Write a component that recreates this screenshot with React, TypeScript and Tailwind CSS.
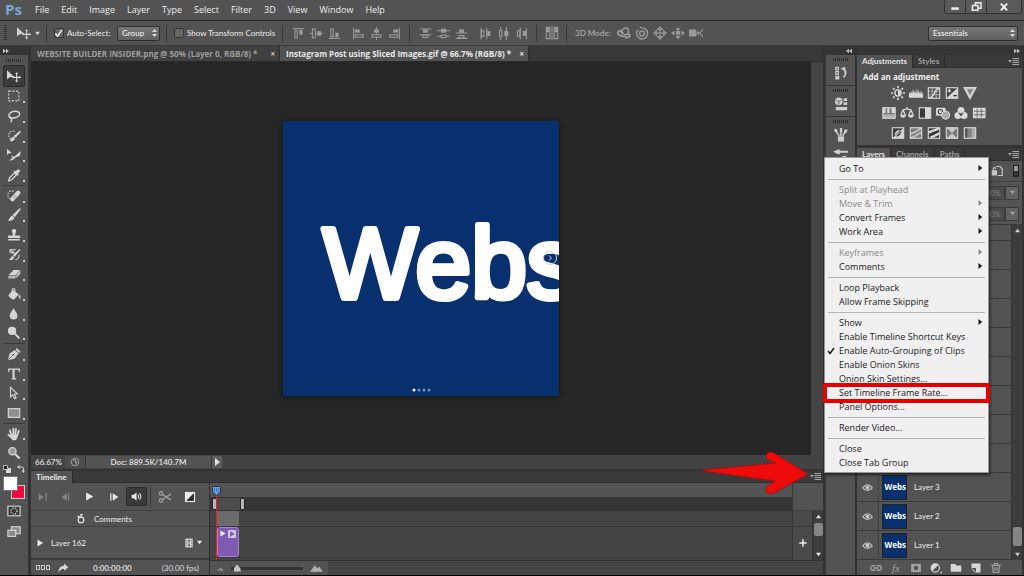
import React from "react";

type Kids = { children?: React.ReactNode };
type IconProps = Kids & { size?: number; box?: string; className?: string };

/* Small icon canvas: 16-unit grid, inherits the text colour. */
function Icon({ size = 14, box = "0 0 16 16", className = "", children }: IconProps) {
  return (
    <svg
      width={size}
      height={size}
      viewBox={box}
      fill="none"
      stroke="currentColor"
      strokeWidth="1.3"
      className={`shrink-0 ${className}`}
      aria-hidden="true"
    >
      {children}
    </svg>
  );
}

const F = { fill: "currentColor", stroke: "none" };

const MoveGlyph = () => (
  <>
    <path {...F} d="M0 1.500v10.500l3-2.600 5-.6z" />
    <path d="M11 5v9M6.800 9.500h8.600" />
    <path {...F} d="M11 3.600l1.800 2.200H9.200zM11 15.400l1.800-2.200H9.200zM5.600 9.500l2-1.700v3.400zM16.200 9.500l-2-1.700v3.400z" />
  </>
);

const tools: { name: string; glyph: React.ReactNode; corner?: boolean; rule?: boolean }[] = [
  { name: "Move Tool", glyph: <MoveGlyph /> },
  { name: "Rectangular Marquee Tool", corner: true, glyph: <rect x="2" y="2.500" width="11.500" height="11" strokeDasharray="2.400 1.600" /> },
  {
    name: "Lasso Tool",
    corner: true,
    glyph: <path strokeWidth="1.600" d="M3.500 10.200C0 7 4 2.400 9.500 2.600c6 .2 6.200 5 1.800 6.800-3 1.300-6.500 1.200-7.200.2-.7 1.300 1.900 1.800 1.500 3.300-.2.900-1.100 1.200-1.600 2" />,
  },
  {
    name: "Quick Selection Tool",
    corner: true,
    glyph: (
      <>
        <path strokeDasharray="1.800 1.300" d="M8.500 2.500a4.600 4.600 0 1 0-3 9.500" />
        <path {...F} d="M16 3.200L9.600 10.200 7.500 8.200 14.700 1.900zM7 8.600l2.200 2.200c-.8 2.800-3.300 3.600-6.400 3.200 1.900-1 2-4.400 4.200-5.400z" />
      </>
    ),
  },
  {
    name: "Slice Tool",
    corner: true,
    glyph: <path {...F} d="M0 1v7l2.200-1.900 3.300-.4zM4.500 8.500L8.300 10 16 3.200 14.500 9l-4 1.500L6 14l-3.600.4 3.900-3.400z" />,
  },
  {
    name: "Eyedropper Tool",
    corner: true,
    glyph: (
      <>
        <path strokeWidth="1.500" d="M8.500 5.500l2.300 2.300-5.800 5.800-3 .9.800-3.200z" />
        <path {...F} d="M7.500 4l1.200-1.200 1.200 1L12 1.700c1.200-1.200 3.800 1.200 2.600 2.600L12.600 6.400l1 1.300-1.200 1.200z" />
      </>
    ),
  },
  {
    name: "Spot Healing Brush Tool",
    corner: true,
    rule: true,
    glyph: (
      <>
        <path strokeDasharray="1.800 1.300" d="M7.500 2.500a4.600 4.600 0 1 0-3.500 8.800" />
        <path strokeWidth="5" strokeLinecap="round" d="M12.800 4.300l-6.500 7.200" />
        <path stroke="#636363" strokeWidth="1" strokeDasharray="1 1" d="M8 6.800l3.500 3M6.500 8.500l3.500 3" />
      </>
    ),
  },
  {
    name: "Brush Tool",
    corner: true,
    glyph: <path {...F} d="M16 .8L9 10.500 6.300 8.100 14.500.4zM5.800 8.700l2.700 2.500c-.9 3.100-4.200 4-7.800 3.200C3.400 13.600 3 9.600 5.800 8.700z" />,
  },
  {
    name: "Clone Stamp Tool",
    corner: true,
    glyph: <path {...F} d="M8 1a2.500 2.500 0 0 1 2 4c-.6.9-.8 2-.6 3.500h4.600c.8 0 1 .4 1 1V11.500H1V9.500c0-.6.3-1 1-1h4.600c.2-1.500 0-2.600-.6-3.500a2.500 2.500 0 0 1 2-4zM1.500 12.700h13V14.400h-13z" />,
  },
  {
    name: "History Brush Tool",
    corner: true,
    glyph: (
      <>
        <path d="M10 2H3.500v4M3.500 2l5 3.500H4.500M13.500 8c.6 3-1 5-4 5.500" />
        <path {...F} d="M15.500 2L8.700 10.200 6.700 8.600 14 1zM6.200 9l2.100 1.900c-1 2.700-3.500 3.300-6.400 2.800 2-.8 2.100-3.800 4.300-4.700z" />
      </>
    ),
  },
  {
    name: "Eraser Tool",
    corner: true,
    glyph: (
      <>
        <path {...F} d="M7.500 3.500h7.500l-5 5.500H2z" />
        <path {...F} opacity=".75" d="M2 9.700h8V13H1z" />
        <path {...F} opacity=".9" d="M10.700 9.200L15.300 4v3.300L10.700 12.800z" />
      </>
    ),
  },
  {
    name: "Paint Bucket Tool",
    corner: true,
    glyph: (
      <>
        <path d="M6 7V3.200a1.500 1.500 0 0 1 3 0V6" />
        <path {...F} d="M7 3.500l6.500 5-5.500 5.800c-.8.700-5.500-2.800-6.200-4.400C1.500 9 6 4.500 7 3.500zM13.500 8.500c2 .7 2.300 2.500 1.800 5.500-1.600-.8-2-2.600-1.800-5.500z" />
      </>
    ),
  },
  { name: "Blur Tool", corner: true, glyph: <path {...F} d="M7.500 1c1.200 3.300 4.500 5.500 4.500 8.800a4.500 4.600 0 0 1-9 0c0-3.300 3.300-5.500 4.500-8.800z" /> },
  {
    name: "Dodge Tool",
    corner: true,
    glyph: (
      <>
        <circle {...F} cx="5.800" cy="5.600" r="4.700" />
        <path strokeWidth="2.200" d="M9 8.800l5 5.200" />
      </>
    ),
  },
  {
    name: "Pen Tool",
    corner: true,
    rule: true,
    glyph: (
      <>
        <path {...F} d="M1 15l2-7.500 6-4 4 4-4.300 6zM9.800 2.800l1.400-1.600 4.300 4.300-1.700 1.400z" />
        <path stroke="#535353" strokeWidth="1" d="M1.500 14.500l5-5" />
        <circle cx="7.300" cy="8.700" r="1.100" fill="#535353" stroke="none" />
      </>
    ),
  },
  { name: "Type Tool", corner: true, glyph: <path strokeWidth="1.500" d="M2 5.500V2.500h12v3M8 2.500v11M5.500 13.500h5M7 3v10.500" /> },
  { name: "Path Selection Tool", corner: true, glyph: <path d="M4 1.500v11l2.600-2.300 2 4.300 1.800-.9-1.900-4.100 3.300-.5z" /> },
  {
    name: "Rectangle Tool",
    corner: true,
    glyph: <rect x="1.500" y="3" width="13" height="10" fill="#909090" />,
  },
  {
    name: "Hand Tool",
    corner: true,
    rule: true,
    glyph: (
      <>
        <path {...F} d="M4 8.500h8.500l-1 4.500-1.500 2H6z" />
        <path strokeWidth="2" strokeLinecap="round" d="M5 9.500L3.300 3.700M7.200 9V1.900M9.400 9l.8-6.800M11.500 10l1.900-5.600M5 12.200L1.500 8.800" />
      </>
    ),
  },
  {
    name: "Zoom Tool",
    glyph: (
      <>
        <circle cx="6.200" cy="6" r="4.200" fill="#9a9a9a" strokeWidth="1.400" />
        <path strokeWidth="2.400" d="M9.500 9.300l5 5" />
      </>
    ),
  },
];

const Grip = () => <span className="h-[3px] w-4 shrink-0 bg-[repeating-linear-gradient(90deg,#2c2c2c_0_1px,#535353_1px_2px)]" />;

const PanelMenu = () => (
  <Icon size={11} box="0 0 11 11" className="text-[#a8a8a8]">
    <path {...F} d="M0 4h4L2 6.500z" />
    <path strokeWidth="1" d="M4.500 2.500H11M4.500 4.500H11M4.500 6.500H11M4.500 8.500H11" />
  </Icon>
);

const Rule = () => <span className="h-[17px] w-px shrink-0 bg-[#383838]" />;

function Updown() {
  return (
    <svg width="5" height="8" viewBox="0 0 5 8" className="pointer-events-none absolute right-[3px]" fill="#d8d8d8" aria-hidden="true">
      <path d="M2.500 0L5 3H0zM2.500 8L0 5h5z" />
    </svg>
  );
}

function Drop({ label, value, wide }: { label: string; value: string; wide?: boolean }) {
  return (
    <span className="relative flex items-center">
      <select
        aria-label={label}
        className={`${wide ? "w-[90px]" : "w-[43px]"} h-[15px] appearance-none rounded-[2px] border border-[#303030] bg-gradient-to-b from-[#767676] to-[#606060] pl-1 text-[8px] leading-none font-semibold text-[#e6e6e6] outline-none`}
      >
        <option>{value}</option>
      </select>
      <Updown />
    </span>
  );
}

function Tick({ label, on }: { label: string; on?: boolean }) {
  return (
    <label className="flex items-center gap-[3px] whitespace-nowrap">
      <span className="relative flex size-[11px] items-center justify-center">
        <input
          type="checkbox"
          defaultChecked={on}
          className="peer size-[10px] appearance-none rounded-[2px] border border-[#353535] bg-[#666]"
        />
        <svg
          viewBox="0 0 10 10"
          className="pointer-events-none absolute hidden size-[9px] peer-checked:block"
          fill="none"
          stroke="#efefef"
          strokeWidth="1.700"
          aria-hidden="true"
        >
          <path d="M1.500 5l2.500 3L8.800 1" />
        </svg>
      </span>
      {label}
    </label>
  );
}

/* Align and distribute glyphs: a guide line with two blocks. */
const alignGroups: [string, React.ReactNode][][] = [
  [
    ["Align top edges", <><path d="M1 2h14" /><rect x="3.500" y="4" width="3" height="9.500" /><rect {...F} x="9" y="3.500" width="4" height="6" /></>],
    ["Align vertical centers", <><path d="M0 8h16" /><rect x="3" y="2.500" width="3.500" height="11" fill="#535353" /><rect {...F} x="9" y="5" width="4.500" height="6" /></>],
    ["Align bottom edges", <><path d="M1 14h14" /><rect x="3.500" y="2.500" width="3" height="9.500" /><rect {...F} x="9" y="7" width="4" height="5.500" /></>],
  ],
  [
    ["Align left edges", <><path d="M2 1v14" /><rect {...F} x="3.500" y="3" width="6" height="4" /><rect x="4" y="9.500" width="10" height="3" /></>],
    ["Align horizontal centers", <><path d="M8 0v16" /><rect {...F} x="5" y="3" width="6" height="4" /><rect x="2.500" y="9.500" width="11" height="3" fill="#535353" /></>],
    ["Align right edges", <><path d="M14 1v14" /><rect {...F} x="6.500" y="3" width="6" height="4" /><rect x="2" y="9.500" width="10" height="3" /></>],
  ],
  [
    ["Distribute top edges", <><path d="M1 2.500h14M1 9.500h14" /><rect {...F} x="5" y="3" width="6" height="4" /><rect x="5" y="10" width="6" height="3" /></>],
    ["Distribute vertical centers", <><path d="M0 4.500h16M0 11.500h16" /><rect {...F} x="5" y="2" width="6" height="5" /><rect x="5" y="10" width="6" height="3" fill="#535353" /></>],
    ["Distribute bottom edges", <><path d="M1 7.500h14M1 14h14" /><rect {...F} x="5" y="3" width="6" height="4" /><rect x="5" y="10.500" width="6" height="3" /></>],
  ],
  [
    ["Distribute left edges", <><path d="M2.500 1v14M9.500 1v14" /><rect x="3" y="4.500" width="3" height="7" /><rect {...F} x="10" y="5" width="4" height="6" /></>],
    ["Distribute horizontal centers", <><path d="M4.500 0v16M11.500 0v16" /><rect x="3" y="4.500" width="3" height="7" fill="#535353" /><rect {...F} x="9" y="5" width="5" height="6" /></>],
    ["Distribute right edges", <><path d="M6.500 1v14M14 1v14" /><rect x="3" y="4.500" width="3" height="7" /><rect {...F} x="9.500" y="5" width="4" height="6" /></>],
  ],
];

const modes3d: [string, React.ReactNode][] = [
  ["Rotate the 3D object", <><circle cx="9.500" cy="6" r="3.700" strokeWidth="1.600" /><path strokeWidth="2" d="M4.500 5C-1 6.500 0 10.500 6 11.500l5 .5M12 9c4 0 4 4.500-2.500 4.500" /><path {...F} d="M4 4l4 3.500-3.500 2z" /></>],
  ["Roll the 3D object", <><circle cx="8" cy="8.500" r="2.800" strokeWidth="1.600" /><path strokeWidth="1.600" d="M3.500 4.200a6.300 6.300 0 1 0 5-2L5.500 1.500" /></>],
  ["Drag the 3D object", <><path d="M8 3v10M3 8h10" /><path d="M8 1l2.500 2.800h-5zM8 15l2.500-2.800h-5zM1 8l2.800-2.500v5zM15 8l-2.800-2.500v5z" /></>],
  ["Slide the 3D object", <><rect {...F} x="5.500" y="5.500" width="5" height="4.500" /><path {...F} d="M8 1l2.800 3.500H5.200zM8 15.500l3-4.500H5zM0 8l4-3v6zM16 8l-4-3v6z" /></>],
  ["Scale the 3D object", <><rect {...F} x="0" y="4" width="8.500" height="8" /><path {...F} d="M8.500 8L11.500 5v6z" /><path d="M16 3.500L12.500 8l3.500 4.500" /></>],
];

function IconButton({ label, children, className = "" }: Kids & { label: string; className?: string }) {
  return (
    <button type="button" aria-label={label} className={`flex items-center justify-center ${className}`}>
      {children}
    </button>
  );
}

function MenuBar() {
  const names = ["File", "Edit", "Image", "Layer", "Type", "Select", "Filter", "3D", "View", "Window", "Help"];
  return (
    <header className="flex h-[21px] shrink-0 items-start border-b border-[#2b2b2b] bg-[#535353] pl-[5px]">
      <span className="w-[24px] font-['Open_Sans',sans-serif] text-[15px] leading-[18px] font-bold text-[#7ba6d6]">Ps</span>
      <nav className="flex h-[19px] items-center gap-3 pl-[6px] font-['Open_Sans',sans-serif] text-[9px] text-[#ececec]">
        {names.map((n) => (
          <button key={n} type="button">{n}</button>
        ))}
      </nav>
      <div className="mr-[2px] ml-auto flex h-[14px] rounded-b-[3px] border border-t-0 border-[#333] bg-[#5a5a5a] text-[#efefef]">
        <IconButton label="Minimize" className="w-[21px] border-r border-[#333]">
          <Icon size={10}><path {...F} d="M2 8.500h12v4H2z" /></Icon>
        </IconButton>
        <IconButton label="Restore" className="w-[21px] border-r border-[#333]">
          <Icon size={11}><path strokeWidth="2.200" d="M6.500 6V2.500h8v8H11M2 6.500h8v7H2z" /></Icon>
        </IconButton>
        <IconButton label="Close window" className="w-[34px]">
          <Icon size={10}><path strokeWidth="3.200" d="M3 2.500l10 11M13 2.500l-10 11" /></Icon>
        </IconButton>
      </div>
    </header>
  );
}

function OptionsBar() {
  return (
    <div className="flex h-[25px] shrink-0 items-center border-b border-[#3a3a3a] bg-[#535353] pr-[6px] pl-[4px] text-[8px] text-[#ececec]">
      <span className="h-4 w-[3px] bg-[repeating-linear-gradient(180deg,#333_0_1px,#535353_1px_2px)]" />
      <span className="flex w-[39px] items-center gap-1 pl-[10px] text-[#d0d0d0]">
        <Icon size={14}><MoveGlyph /></Icon>
        <Icon size={5} box="0 0 6 6"><path {...F} d="M0 1h6L3 5z" /></Icon>
      </span>
      <Rule />
      <span className="flex w-[119px] items-center justify-between px-[6px]">
        <Tick label="Auto-Select:" on />
        <Drop label="Auto-select target" value="Group" />
      </span>
      <Rule />
      <span className="w-[115px] pl-[6px]"><Tick label="Show Transform Controls" /></span>
      <Rule />
      {[0, 2].map((g) => (
        <React.Fragment key={g}>
          <span className="flex gap-[6px] px-[6px] text-[#9c9c9c]">
            {[g, g + 1].map((k) => (
              <span key={k} className="flex">
                {alignGroups[k].map(([n, d]) => (
                  <IconButton key={n} label={n} className="w-[18px]"><Icon size={13}>{d}</Icon></IconButton>
                ))}
              </span>
            ))}
          </span>
          <Rule />
        </React.Fragment>
      ))}
      <IconButton label="Auto-align layers" className="w-[29px] text-[#9a9a9a]">
        <Icon size={14}>
          <path d="M1.500 1.500h4v13h-4zM10.500 1.500h4v13h-4zM8 0v16" />
          <path {...F} d="M1.500 2h4v5h-4zM10.500 2h4v5h-4z" />
        </Icon>
      </IconButton>
      <Rule />
      <span className="w-[48px] pl-2 font-semibold whitespace-nowrap text-[#a8a8a8]">3D Mode:</span>
      <span className="flex text-[#9a9a9a]">
        {modes3d.map(([n, d]) => (
          <IconButton key={n} label={n} className="w-[18px]"><Icon size={14}>{d}</Icon></IconButton>
        ))}
      </span>
      <span className="ml-auto"><Drop label="Workspace" value="Essentials" wide /></span>
    </div>
  );
}

function ToolBar() {
  return (
    <aside className="flex w-[31px] shrink-0 flex-col border-r-[3px] border-[#333] bg-[#535353] text-[#d6d6d6]">
      <div className="flex h-[9px] shrink-0 items-center bg-[#353535] pl-[3px] text-[#c0c0c0]">
        <Icon size={6} box="0 0 8 8"><path {...F} d="M0 1l4 3-4 3zM4 1l4 3-4 3z" /></Icon>
      </div>
      <div className="flex h-[10px] shrink-0 items-center justify-center"><Grip /></div>
      <div className="flex h-[398px] shrink-0 flex-col px-[3px]">
        {tools.map((t, i) => (
          <React.Fragment key={t.name}>
            {t.rule && <span className="h-px shrink-0 bg-[#3a3a3a]" />}
            <button
              type="button"
              aria-label={t.name}
              className={`relative flex min-h-0 flex-1 items-center justify-center rounded-[2px] ${i === 0 ? "border border-[#2a2a2a] bg-[#3c3c3c]" : ""}`}
            >
              <Icon size={14}>{t.glyph}</Icon>
              {t.corner && <span className="absolute right-0 bottom-[3px] size-[2px] bg-[#c8c8c8]" />}
            </button>
          </React.Fragment>
        ))}
      </div>
      <div className="flex h-[11px] shrink-0 items-center justify-between px-[3px]">
        <Icon size={8}><path {...F} d="M6 6h10v10H6z" /><path d="M1 1h8v8H1z" fill="#222" strokeWidth="1.600" /></Icon>
        <Icon size={8}><path strokeWidth="2" d="M4 4h5q4 0 4 4v4" /><path {...F} d="M0 4l5-4v8zM13 16l-4-5h7z" /></Icon>
      </div>
      <div className="relative mx-[3px] mt-[2px] h-[23px] shrink-0">
        <button type="button" aria-label="Background color" className="absolute right-0 bottom-0 size-[14px] border border-[#cfcfcf] bg-[#f5053c]" />
        <button type="button" aria-label="Foreground color" className="absolute top-0 left-0 size-[15px] border border-[#777] bg-white" />
      </div>
      <IconButton label="Quick mask mode" className="h-[23px] shrink-0">
        <Icon size={14}>
          <rect x="1" y="2.500" width="14" height="11" fill="#3a3a3a" />
          <circle cx="8" cy="8" r="3.500" strokeDasharray="1.600 1.200" />
        </Icon>
      </IconButton>
      <IconButton label="Screen mode" className="h-[20px] shrink-0">
        <Icon size={14}>
          <rect x="5" y="2" width="10" height="8" fill="#8a8a8a" />
          <rect x="1" y="6" width="9" height="7" fill="#8a8a8a" />
        </Icon>
      </IconButton>
    </aside>
  );
}

function DocumentTabs() {
  const tab = "flex items-center justify-between whitespace-nowrap pl-[6px] pr-[4px] font-['Open_Sans',sans-serif] text-[8px] font-bold border-r border-[#2e2e2e]";
  return (
    <div className="flex h-[16px] shrink-0 border-b border-[#2a2a2a] bg-[#383838]">
      <div className={`${tab} w-[249px] bg-[#404040] text-[#9d9d9d]`}>
        WEBSITE BUILDER INSIDER.png @ 50% (Layer 0, RGB/8) *
        <button type="button" aria-label="Close WEBSITE BUILDER INSIDER.png" className="text-[#c8c8c8]">×</button>
      </div>
      <div className={`${tab} w-[249px] bg-[#535353] text-[#e8e8e8]`}>
        Instagram Post using Sliced Images.gif @ 66.7% (RGB/8) *
        <button type="button" aria-label="Close Instagram Post using Sliced Images.gif">×</button>
      </div>
    </div>
  );
}

function Canvas() {
  return (
    <div className="flex min-h-0 flex-1">
      <main className="flex flex-1 items-center justify-center bg-[#262626]">
        <div className="relative h-[275px] w-[276px] overflow-hidden bg-[#08306e] shadow-[0_1px_4px_#111]">
          <svg width="276" height="275" className="block" role="img" aria-label="Webs">
            <text
              x="40"
              y="177"
              fill="#fff"
              stroke="#fff"
              strokeWidth="6"
              strokeLinejoin="round"
              fontFamily="'Liberation Sans', sans-serif"
              fontWeight="400"
              fontSize="100"
            >
              Webs
            </text>
            <g fill="none" stroke="#d5d5d5">
              <circle cx="267" cy="137" r="6.500" />
              <path d="M266 134.500l2.500 2.500-2.500 2.500" />
            </g>
            <circle cx="131" cy="269" r="1.500" fill="#fff" />
            <g fill="#7d90b3">
              <circle cx="136" cy="269" r="1.500" />
              <circle cx="141" cy="269" r="1.500" />
              <circle cx="146" cy="269" r="1.500" />
            </g>
          </svg>
        </div>
      </main>
      <div className="w-3 bg-[#444]" />
    </div>
  );
}

function StatusBar() {
  return (
    <div className="flex h-[14px] shrink-0 items-center bg-[#434343] text-[8px] font-semibold text-[#e0e0e0]">
      <span className="w-[34px] pl-1">66.67%</span>
      <span className="flex h-3 w-[21px] items-center justify-center border-r border-[#333] bg-[#4d4d4d]">
        <Icon size={10} className="text-[#b0b0b0]"><circle cx="8" cy="8" r="6" /><path d="M5 5c4 0 6 3 5 7M8 4l2 6" /></Icon>
      </span>
      <span className="flex h-3 w-[125px] items-center justify-center bg-[#535353]">Doc: 889.5K/140.7M</span>
      <IconButton label="Status options" className="h-3 w-[11px] border-l border-[#333] bg-[#5c5c5c]">
        <Icon size={8} box="0 0 8 8"><path {...F} d="M2 0l5 4-5 4z" /></Icon>
      </IconButton>
    </div>
  );
}

function Timeline() {
  return (
    <section className="flex h-[106px] shrink-0 flex-col border-t-2 border-[#333] bg-[#535353] text-[8px] text-[#ececec]">
      <div className="flex h-[12px] shrink-0 items-center justify-between border-b border-[#2f2f2f] bg-[#3a3a3a] pr-[2px]">
        <span className="flex h-[12px] w-[42px] items-center border-r border-[#2a2a2a] bg-[#535353] pl-[5px] font-bold">Timeline</span>
        <PanelMenu />
      </div>
      <div className="flex min-h-0 flex-1">
        <div className="flex w-[179px] shrink-0 flex-col border-r border-[#303030]">
          <div className="flex h-[28px] items-center border-b border-[#404040]">
            <span className="flex text-[#e6e6e6]">
              <IconButton label="First frame" className="w-[24px] text-[#858585]"><Icon size={10}><path {...F} d="M1 2l8 6-8 6zM12 2h2v12h-2z" /></Icon></IconButton>
              <IconButton label="Previous frame" className="w-[22px] text-[#858585]"><Icon size={10}><path {...F} d="M9 2L1 8l8 6zM11 2h2v12h-2z" /></Icon></IconButton>
              <IconButton label="Play" className="w-[25px]"><Icon size={9}><path {...F} d="M2 1l13 7-13 7z" /></Icon></IconButton>
              <IconButton label="Next frame" className="w-[24px]"><Icon size={10}><path {...F} d="M2 2h2v12H2zM6 2l9 6-9 6z" /></Icon></IconButton>
              <IconButton label="Mute audio" className="h-[19px] w-[21px] rounded-[2px] border border-[#2c2c2c] bg-[#3a3a3a]">
                <Icon size={11}><path {...F} d="M1 5.500h3L8 2v12L4 10.500H1z" /><path strokeWidth="1.500" d="M10 5q2 3 0 6M12.500 3.500q3.500 4.500 0 9" /></Icon>
              </IconButton>
            </span>
            <span className="ml-[3px] flex h-6 items-center border-l border-[#404040]">
              <IconButton label="Split at playhead" className="w-[28px] text-[#9a9a9a]">
                <Icon size={14}><circle cx="3.500" cy="4" r="2" strokeWidth="1.500" /><circle cx="3.500" cy="12" r="2" strokeWidth="1.500" /><path strokeWidth="1.600" d="M5 5l10 6.500M5 11l10-6.500" /></Icon>
              </IconButton>
              <IconButton label="Transition" className="w-[22px]">
                <Icon size={12}><rect x="2" y="2" width="12" height="12" fill="#2c2c2c" strokeWidth="1.500" /><path {...F} d="M2 2h12L2 14z" /></Icon>
              </IconButton>
            </span>
          </div>
          <div className="flex h-[16px] items-center gap-2 border-b border-[#404040] pl-[45px]">
            <Icon size={10}><circle cx="8" cy="9.500" r="4.500" strokeWidth="1.800" /><path strokeWidth="1.800" d="M2 3.500l4 .5M8 5V1h3" /></Icon>
            Comments
          </div>
          <div className="flex h-[33px] items-center border-b-2 border-[#3a3a3a] pl-[5px]">
            <Icon size={8}><path {...F} d="M3 1l11 7-11 7z" /></Icon>
            <span className="pl-[7px]">Layer 162</span>
            <span className="mr-[7px] ml-auto flex items-center gap-[3px]">
              <Icon size={10}><path strokeWidth="1.500" d="M3 1v14M13 1v14M6 1v14M10 1v14M6 8h4M3 2h10M3 14h10M3 6h3M3 10h3M10 6h3M10 10h3" /></Icon>
              <Icon size={5} box="0 0 6 6"><path {...F} d="M0 1h6L3 5z" /></Icon>
            </span>
          </div>
          <div className="flex flex-1 items-center pl-[4px] text-[#d8d8d8]">
            <span className="flex gap-px pl-px">
              {[0, 1, 2].map((n) => <span key={n} className="h-[5px] w-1 border border-[#c8c8c8]" />)}
            </span>
            <IconButton label="Render video" className="ml-[7px]"><Icon size={12}><path {...F} d="M2 14C2 7 6 5 9.500 5V2L15 7l-5.500 4.500V9C6 9 4 10.500 2 14z" /></Icon></IconButton>
            <span className="ml-[24px] font-bold">0:00:00:00</span>
            <span className="ml-auto pr-[10px]">(30.00 fps)</span>
          </div>
        </div>
        <div className="flex min-w-0 flex-1 flex-col">
          <div className="flex min-h-0 flex-1">
            <div className="relative flex min-w-0 flex-1 flex-col bg-[#444]">
              <div className="h-[14px] bg-[#535353]" />
              <div className="flex h-[14px] bg-[#363636] pl-[2px]">
                <span className="flex h-3 w-[33px] justify-between self-center bg-[#4c4c4c]">
                  <span className="w-[5px] rounded-[1px] border border-[#222] bg-[#b5b5b5]" />
                  <span className="w-[5px] rounded-[1px] border border-[#222] bg-[#b5b5b5]" />
                </span>
              </div>
              <div className="h-[16px] border-b border-[#383838] pl-[7px]"><div className="h-full w-[22px] bg-[#6b6b6b]" /></div>
              <div className="h-[31px] border-b border-[#383838] pl-[7px]">
                <div className="flex h-[30px] w-[22px] items-start justify-between rounded-[3px] border border-[#a287cf] bg-[#7d5bb0] p-[2px]">
                  <Icon size={7}><path {...F} d="M1 1l12 7-12 7z" /></Icon>
                  <span className="flex size-[8px] items-center justify-center rounded-[1px] bg-[#d2c5e6] text-[#7d5bb0]"><Icon size={6}><path {...F} d="M3 0l12 8-12 8z" /></Icon></span>
                </div>
              </div>
              <div className="absolute top-[3px] bottom-0 left-[2px] flex w-[9px] flex-col items-center">
                <svg width="9" height="10" viewBox="0 0 9 10" className="shrink-0" aria-hidden="true">
                  <path d="M.5 1.500q0-1 1-1h6q1 0 1 1V6l-4 3.500L.5 6z" fill="#6ba0d8" stroke="#1d3550" />
                  <path d="M2 3h5M2 5h5" stroke="#1d4d7c" strokeDasharray="1 1" />
                </svg>
                <span className="w-px flex-1 bg-[#ee1c24]" />
              </div>
            </div>
            <div className="flex w-[20px] flex-col border-l border-[#383838] bg-[#4a4a4a]">
              <div className="h-[28px] border-b border-[#404040] bg-[#535353]" />
              <div className="h-[16px] border-b border-[#383838]" />
              <IconButton label="Add media" className="h-[31px]"><Icon size={10}><path strokeWidth="2.400" d="M8 2v12M2 8h12" /></Icon></IconButton>
            </div>
            <div className="flex w-[11px] flex-col">
              <div className="h-[28px] border-b border-[#404040]" />
              <div className="flex flex-1 flex-col items-center justify-between border-l border-[#333] bg-[#3c3c3c] py-[3px]">
                <Icon size={5} box="0 0 6 6"><path {...F} d="M0 5h6L3 1z" /></Icon>
                <span className="mb-3 h-[13px] w-[9px] rounded-[2px] bg-[#858585]" />
                <Icon size={5} box="0 0 6 6"><path {...F} d="M0 1h6L3 5z" /></Icon>
              </div>
            </div>
          </div>
          <div className="flex h-[15px] shrink-0 items-center border-t border-[#333] bg-[#444]">
            <span className="flex h-full w-[118px] items-center bg-[#535353] pl-[7px]">
              <Icon size={7} className="text-[#8c8c8c]"><path {...F} d="M0 13L8 5l8 8z" /></Icon>
              <input
                type="range"
                aria-label="Timeline zoom"
                defaultValue={4}
                className="mx-[7px] h-[10px] w-[72px] appearance-none bg-[linear-gradient(#333,#333)] bg-[length:100%_3px] bg-center bg-no-repeat [&::-webkit-slider-thumb]:size-[7px] [&::-webkit-slider-thumb]:appearance-none [&::-webkit-slider-thumb]:bg-[#c5c5c5] [&::-webkit-slider-thumb]:[clip-path:polygon(50%_0,100%_60%,100%_100%,0_100%,0_60%)]"
              />
              <Icon size={13}><path {...F} fill="#b0b0b0" d="M0 12L6 4l3 4 2-2.500L16 12z" /></Icon>
            </span>
          </div>
        </div>
      </div>
    </section>
  );
}

function IconDock() {
  const items: [string, React.ReactNode][] = [
    ["History", <><path d="M2 1.500h3v3H2zM2 6.500h3v3H2z" /><path {...F} d="M1.500 11h4.500v4.500H1.500zM7.500 2.500L13 1v5.500z" /><path strokeWidth="2" d="M11 3.500q4.500 4 0 9.500" /></>],
    ["Properties", <><circle {...F} cx="5.500" cy="5" r="4.300" /><path stroke="#535353" strokeWidth=".9" d="M2.500 3.500l3 1.700 3-1.700M5.500 5.200v3.500" /><path {...F} d="M11 1.500h4v3h-4zM11 6h4v3h-4zM2 11.500h13V15H2z" /></>],
    ["Brush presets", <><path {...F} d="M4.500 9.500h7V15.500h-7z" /><path strokeWidth="1.700" d="M6 9L2.500 4M8 9V4M10 9l3-5" /><path {...F} d="M.5.500l3.500 1.500-.5 3.500L.5 4zM6.700 0h2.600v4.800H6.700zM12 2l3.500-.5L14 6l-3-1z" /></>],
  ];
  return (
    <aside className="flex w-[30px] shrink-0 flex-col border-l border-[#3a3a3a] bg-[#535353] text-[#cfcfcf]">
      <div className="flex h-[9px] shrink-0 items-center justify-end bg-[#353535] pr-[3px] text-[#c0c0c0]">
        <Icon size={6} box="0 0 8 8"><path {...F} d="M4 1L0 4l4 3zM8 1L4 4l4 3z" /></Icon>
      </div>
      {items.map(([n, d]) => (
        <div key={n} className="flex h-[31px] shrink-0 flex-col items-center gap-[5px] border-b border-[#343434] pt-[3px] nth-[4]:border-b-0">
          <Grip />
          <IconButton label={n}><Icon size={14}>{d}</Icon></IconButton>
        </div>
      ))}
      <IconButton label="Brush" className="h-3 shrink-0">
        <Icon size={15}><path {...F} d="M0 5l6-2.500 2 1.500h8v2H8L6 8z" /><path {...F} d="M9 10l5-1v4z" /></Icon>
      </IconButton>
    </aside>
  );
}

const adjustments: [string, React.ReactNode][][] = [
  [
    ["Brightness/Contrast", <><circle cx="8" cy="8" r="3.500" strokeWidth="1.500" /><path {...F} d="M8 4.500a3.500 3.500 0 0 1 0 7z" /><path strokeWidth="1.900" d="M8 0v2.500M8 13.500V16M0 8h2.500M13.500 8H16M2.300 2.300l1.800 1.800M11.900 11.900l1.800 1.800M2.300 13.700l1.800-1.800M11.900 4.100l1.800-1.800" /></>],
    ["Levels", <path {...F} d="M0 13.500V8l1-1v2l1.500-3v3L4 4v5l1.500-6v6L7 5v4l1.500-7v7L10 4v5l1.500-6v6L13 5v4l1.500-4v4L16 8v5.500z" />],
    ["Curves", <><rect x="1.500" y="2" width="13" height="12" /><path opacity=".6" d="M6 2v12M10.500 2v12M1.500 6h13M1.500 10h13" /><path strokeWidth="1.800" d="M2 13.500c8 0 5-10 12-11" /></>],
    ["Exposure", <><rect x="1.500" y="2" width="13" height="12" fill="#444" /><path {...F} d="M14.500 2v12h-13z" /><path strokeWidth="1.500" d="M3 5.500h4M5 3.500v4" /><path stroke="#333" strokeWidth="1.500" d="M9.500 11h4" /></>],
    ["Vibrance", <><path fill="#b4b4b4" strokeWidth="1.800" d="M1.500 2h13L8 14z" /><path {...F} fill="#7a7a7a" d="M5 4h6l-3 5z" /></>],
  ],
  [
    ["Hue/Saturation", <><rect x="1" y="2" width="14" height="12" fill="#777" /><path {...F} d="M1 2h3v6H1zM6 2h2.500v6H6zM11 2h4v6h-4z" /><path {...F} opacity=".6" d="M1 9.500h14V14H1z" /></>],
    ["Color Balance", <><path strokeWidth="1.500" d="M8 1v3M3 4.500q5-2 10 0M3.500 4.500L1 10M3.500 4.500L6 10M12.500 4.500L10 10M12.500 4.500L15 10" /><path {...F} d="M0 10h7q-.5 3.500-3.500 3.500T0 10zM9 10h7q-.5 3.500-3.500 3.500T9 10z" /></>],
    ["Black & White", <><rect x="1.500" y="2" width="13" height="12" fill="#3a3a3a" /><path {...F} d="M8 2h6.500v12H8z" /></>],
    ["Photo Filter", <><rect {...F} x="0" y="2" width="11" height="9" rx="1" /><circle cx="5" cy="6.500" r="2.500" stroke="#444" /><circle cx="11" cy="10.500" r="4.500" fill="#aaa" /></>],
    ["Channel Mixer", <><circle {...F} cx="8" cy="5" r="4" /><circle {...F} cx="4.500" cy="10.800" r="4" /><circle {...F} cx="11.500" cy="10.800" r="4" /><path {...F} fill="#4a4a4a" d="M5 7l3 1.500L11 7l-2 4H7z" /></>],
    ["Color Lookup", <><rect {...F} x="1" y="2" width="14.500" height="12" /><path stroke="#606060" strokeWidth="1" d="M5.800 3v10M10.600 3v10M2 6h12.500M2 10h12.500" /></>],
  ],
  [
    ["Invert", <><rect x="1.500" y="2" width="13" height="12" fill="#3a3a3a" /><path {...F} d="M14.500 2v12h-13z" /><path {...F} d="M4 11q0-6 7-7z" /><path {...F} fill="#444" d="M5.500 12q6 0 6.500-7z" /></>],
    ["Posterize", <><rect x="1.500" y="2" width="13" height="12" fill="#777" /><path strokeWidth="2.500" opacity=".7" d="M2 9l5-2 7-4.500M2 14l5-2.500L14 7" /></>],
    ["Threshold", <><rect x="1.500" y="2" width="13" height="12" fill="#333" /><path strokeWidth="2.800" d="M2 7.500l4-2 4-1 4-2M4 13l4-1.500 6-3" /></>],
    ["Selective Color", <><rect x="1.500" y="2" width="13" height="12" fill="#777" /><path {...F} d="M2 2h12L8 8zM2 14h12L8 8z" opacity=".8" /></>],
    ["Gradient Map", <><rect x="1.500" y="2" width="13" height="12" fill="#555" /><path {...F} opacity=".35" d="M5 2h9v12H5z" /><path {...F} opacity=".5" d="M10 2h4.500v12H10z" /></>],
  ],
];

function PanelTabs({ names }: { names: string[] }) {
  return (
    <div className="flex h-[13px] shrink-0 items-center border-b border-[#2f2f2f] bg-[#3a3a3a] pr-[3px]">
      {names.map((n, i) => (
        <button
          key={n}
          type="button"
          className={`h-[13px] border-r border-[#2c2c2c] px-[5px] text-[8px] leading-[12px] font-bold ${i === 0 ? "bg-[#535353] text-[#e4e4e4]" : "text-[#a0a0a0]"}`}
        >
          {n}
        </button>
      ))}
      <span className="ml-auto"><PanelMenu /></span>
    </div>
  );
}

function LayerRow({ name }: { name?: string }) {
  return (
    <li className="flex h-[29px] shrink-0 items-center border-t border-[#3a3a3a]">
      <span className="flex h-full w-[22px] items-center justify-center border-r border-[#434343] text-[#c4c4c4]">
        {name && <Icon size={11}><path strokeWidth="1.600" d="M1 8.500q7-9 14 0-7 7.500-14 0z" /><circle {...F} cx="8" cy="8" r="3" /></Icon>}
      </span>
      {name && (
        <>
          <span className="ml-[3px] flex size-[25px] items-center justify-end border border-[#222] bg-[#08306e] font-['Open_Sans',sans-serif] text-[8px] font-bold text-white">Webs</span>
          <span className="pl-[7px] text-[8px] text-[#ececec]">{name}</span>
        </>
      )}
    </li>
  );
}

function PercentField({ label }: { label: string }) {
  return (
    <div className="flex h-[21px] items-center justify-end pr-[3px]">
      <input aria-label={label} defaultValue="100%" disabled className="h-[14px] w-[28px] border border-[#3d3d3d] bg-[#4a4a4a] pr-[3px] text-right text-[8px] text-[#858585]" />
      <button type="button" aria-label={`${label} slider`} className="flex h-[14px] w-[14px] items-center justify-center border border-[#3a3a3a] bg-[#626262] text-[#a0a0a0]">
        <Icon size={5} box="0 0 6 6"><path {...F} d="M0 1h6L3 5z" /></Icon>
      </button>
    </div>
  );
}

function Panels() {
  return (
    <aside className="flex w-[169px] shrink-0 flex-col border-x-2 border-[#333] bg-[#535353]">
      <div className="flex h-[9px] shrink-0 items-center justify-end bg-[#353535] pr-[2px] text-[#c0c0c0]">
        <Icon size={6} box="0 0 8 8"><path {...F} d="M0 1l4 3-4 3zM4 1l4 3-4 3z" /></Icon>
      </div>
      <PanelTabs names={["Adjustments", "Styles"]} />
      <section className="flex h-[77px] shrink-0 flex-col pt-[3px]">
        <h2 className="h-[12px] pl-[6px] font-['Open_Sans',sans-serif] text-[8px] leading-[12px] font-bold text-[#f0f0f0]">Add an adjustment</h2>
        <div className="flex flex-col pr-3 text-[#d8d8d8]">
          {adjustments.map((row, i) => (
            <div key={i} className="flex h-[20px] items-center justify-center">
              {row.map(([n, d]) => (
                <IconButton key={n} label={n} className="w-[18px]"><Icon size={14}>{d}</Icon></IconButton>
              ))}
            </div>
          ))}
        </div>
      </section>
      <div className="h-[3px] shrink-0 bg-[#333]" />
      <PanelTabs names={["Layers", "Channels", "Paths"]} />
      <div className="flex h-[21px] shrink-0 items-center justify-end gap-[10px] border-b border-[#404040] pr-[3px] text-[#c8c8c8]">
        <Icon size={12}><path {...F} d="M1 7h7v7H1z" /><path strokeWidth="1.500" d="M3 7V5q2-3 3.500 0M7 2h5l3 3v9H9" /></Icon>
        <span className="h-3 w-[6px] border border-[#222] bg-gradient-to-b from-[#999] from-50% to-[#333] to-50%" />
      </div>
      <PercentField label="Opacity" />
      <PercentField label="Fill" />
      <div className="flex min-h-0 flex-1 border-t border-[#3a3a3a]">
        <ul className="flex min-h-0 flex-1 flex-col justify-end overflow-hidden border-b border-[#3a3a3a]">
          {Array.from({ length: 9 }, (_, i) => <LayerRow key={i} />)}
          <LayerRow name="Layer 3" />
          <LayerRow name="Layer 2" />
          <LayerRow name="Layer 1" />
        </ul>
        <div className="flex w-[11px] flex-col items-center border-l border-[#333] bg-[#3c3c3c] py-[3px] text-[#d0d0d0]">
          <Icon size={5} box="0 0 6 6"><path {...F} d="M0 5h6L3 1z" /></Icon>
          <span className="mt-auto mb-[6px] h-[19px] w-[9px] rounded-[2px] bg-[#858585]" />
          <Icon size={5} box="0 0 6 6"><path {...F} d="M0 1h6L3 5z" /></Icon>
        </div>
      </div>
      <div className="flex h-[15px] shrink-0 items-center gap-[8px] pl-[13px] text-[#a2a2a2]">
        <IconButton label="Link layers"><Icon size={12}><path strokeWidth="1.700" d="M7 5H4a3 3 0 0 0 0 6h3M9 5h3a3 3 0 0 1 0 6H9M5 8h6" /></Icon></IconButton>
        <button type="button" className="w-3 font-['Liberation_Serif',serif] text-[11px] leading-3 italic">fx</button>
        <IconButton label="Add mask"><Icon size={12}><rect {...F} x="1.500" y="2.500" width="13" height="11" /><circle cx="8" cy="8" r="3" fill="#535353" stroke="none" /></Icon></IconButton>
        <IconButton label="New adjustment layer"><Icon size={12} className="text-[#d8d8d8]"><circle cx="7" cy="8" r="5.500" strokeWidth="1.500" /><path {...F} d="M3 12L11 4a5.500 5.500 0 0 0-8 8zM14 13h2v2h-2z" /></Icon></IconButton>
        <IconButton label="New group"><Icon size={12} className="text-[#d8d8d8]"><path {...F} d="M1 2.500h6l1.500 2H15V13H1z" /></Icon></IconButton>
        <IconButton label="New layer"><Icon size={12} className="text-[#d8d8d8]"><path {...F} d="M2 2h12v12H8V8H2z" /><path d="M2.500 9l5 5" /></Icon></IconButton>
        <IconButton label="Delete layer"><Icon size={12}><path strokeWidth="1.500" d="M1.500 4.500h13M6 4V2h4v2M3.500 5l.7 9h7.600l.7-9M6.500 7v5M9.500 7v5" /></Icon></IconButton>
      </div>
    </aside>
  );
}

type Entry = { text: string; off?: boolean; sub?: boolean; on?: boolean; marked?: boolean };
const menuGroups: Entry[][] = [
  [{ text: "Go To", sub: true }],
  [
    { text: "Split at Playhead", off: true },
    { text: "Move & Trim", off: true, sub: true },
    { text: "Convert Frames", sub: true },
    { text: "Work Area", sub: true },
  ],
  [{ text: "Keyframes", off: true, sub: true }, { text: "Comments", sub: true }],
  [{ text: "Loop Playback" }, { text: "Allow Frame Skipping" }],
  [
    { text: "Show", sub: true },
    { text: "Enable Timeline Shortcut Keys" },
    { text: "Enable Auto-Grouping of Clips", on: true },
    { text: "Enable Onion Skins" },
    { text: "Onion Skin Settings..." },
    { text: "Set Timeline Frame Rate...", marked: true },
    { text: "Panel Options..." },
  ],
  [{ text: "Render Video..." }],
  [{ text: "Close" }, { text: "Close Tab Group" }],
];

function TimelineMenu() {
  return (
    <div role="menu" className="absolute top-[157px] right-[35px] w-[165px] border border-[#979797] bg-[#f0f0f0] pt-1 pb-[2px] font-['Open_Sans',sans-serif] text-[9px] text-[#1a1a1a] shadow-[1px_2px_3px_#0009]">
      {menuGroups.map((group, g) => (
        <div key={g} className={g > 0 ? "relative pt-[7px] before:absolute before:inset-x-[3px] before:top-[3px] before:h-px before:bg-[#b4b4b4]" : ""}>
          {group.map((e) => (
            <button
              key={e.text}
              type="button"
              role="menuitem"
              disabled={e.off}
              className={`relative flex h-[14px] w-full items-center pl-[14px] whitespace-nowrap ${e.off ? "text-[#8a8a8a]" : ""}`}
            >
              {e.on && <Icon size={8} className="absolute left-[2px]"><path strokeWidth="3" d="M2 8l4 5 8-11" /></Icon>}
              {e.text}
              {e.sub && <Icon size={6} box="0 0 8 8" className="mr-[5px] mb-[2px] ml-auto"><path {...F} d="M2 0l5 4-5 4z" /></Icon>}
              {e.marked && <span className="pointer-events-none absolute -inset-x-[2px] -inset-y-[3px] border-4 border-[#e60000]" />}
            </button>
          ))}
        </div>
      ))}
    </div>
  );
}

export default function App() {
  return (
    <div className="relative flex h-screen flex-col overflow-hidden border-b border-black bg-[#333] font-[Lato,sans-serif]">
      <MenuBar />
      <OptionsBar />
      <div className="flex min-h-0 flex-1">
        <ToolBar />
        <div className="flex min-w-0 flex-1 flex-col">
          <DocumentTabs />
          <Canvas />
          <StatusBar />
          <Timeline />
        </div>
        <div className="w-[2px] shrink-0 bg-[#333]" />
        <IconDock />
        <Panels />
      </div>
      <TimelineMenu />
      <svg width="108" height="46" viewBox="0 0 108 46" className="pointer-events-none absolute right-[214px] bottom-[79px]" aria-hidden="true">
        <path
          d="M1 20L74 13L67 10C61 6 66 0 72 3L106 24L72 43C65 46 61 39 66 36L73 31L1 21Z"
          fill="#ee0b0b"
          stroke="#a80808"
          strokeWidth=".7"
        />
      </svg>
    </div>
  );
}
